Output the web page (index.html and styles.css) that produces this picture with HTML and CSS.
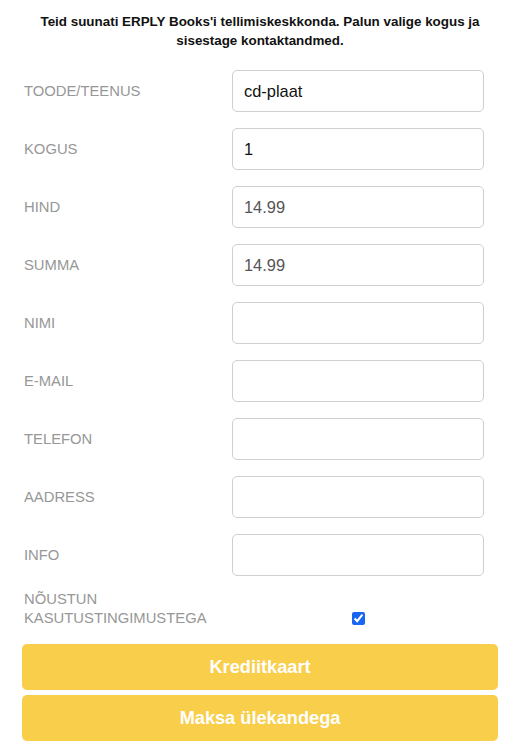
FILE: index.html
```html
<!DOCTYPE html>
<html lang="et">
<head>
<meta charset="utf-8">
<title>Tellimus</title>
<link rel="stylesheet" href="styles.css">
</head>
<body>
<div class="page">
  <p class="intro">Teid suunati ERPLY Books'i tellimiskeskkonda. Palun valige kogus ja sisestage kontaktandmed.</p>
  <form class="form">
    <div class="row"><label class="label">TOODE/TEENUS</label><input class="field dark" type="text" value="cd-plaat"></div>
    <div class="row"><label class="label">KOGUS</label><input class="field dark" type="text" value="1"></div>
    <div class="row"><label class="label">HIND</label><input class="field" type="text" value="14.99"></div>
    <div class="row"><label class="label">SUMMA</label><input class="field" type="text" value="14.99"></div>
    <div class="row"><label class="label">NIMI</label><input class="field" type="text"></div>
    <div class="row"><label class="label">E-MAIL</label><input class="field" type="text"></div>
    <div class="row"><label class="label">TELEFON</label><input class="field" type="text"></div>
    <div class="row"><label class="label">AADRESS</label><input class="field" type="text"></div>
    <div class="row"><label class="label">INFO</label><input class="field" type="text"></div>
    <div class="row agree"><label class="label">NÕUSTUN KASUTUSTINGIMUSTEGA</label><div class="checkcell"><input class="check" type="checkbox" checked></div></div>
    <div class="buttons">
      <button type="button" class="btn">Krediitkaart</button>
      <button type="button" class="btn">Maksa ülekandega</button>
    </div>
  </form>
</div>
</body>
</html>
```
FILE: styles.css
```css
html, body {
  margin: 0;
  padding: 0;
  background: #fff;
}
body {
  font-family: "Liberation Sans", Arial, sans-serif;
}
.page {
  padding: 0 21px 0 22px;
}
.intro {
  margin: 12px 0 0;
  text-align: center;
  font-weight: bold;
  font-size: 13.4px;
  line-height: 19px;
  color: #111;
}
.form {
  margin-top: 20px;
  display: flex;
  flex-direction: column;
  gap: 16px;
}
.row {
  display: flex;
  align-items: center;
  padding-left: 2px;
}
.label {
  width: 208px;
  flex: none;
  font-size: 14.8px;
  color: #979797;
  line-height: 19px;
}
.field {
  box-sizing: border-box;
  width: 252px;
  height: 42px;
  border: 1px solid #cfcfcf;
  border-radius: 5px;
  padding: 0 11px;
  font-family: "Liberation Sans", Arial, sans-serif;
  font-size: 16.4px;
  color: #555;
  background: #fff;
  outline: none;
}
.field.dark {
  color: #111;
}
.agree {
  margin-top: -2px;
  align-items: flex-end;
}
.checkcell {
  width: 252px;
  display: flex;
  justify-content: center;
  padding-bottom: 3px;
}
.check {
  margin: 0;
  width: 13px;
  height: 13px;
  accent-color: #1a66f0;
}
.buttons {
  display: flex;
  flex-direction: column;
  gap: 5px;
  margin-top: 0;
}
.btn {
  height: 46px;
  border: none;
  border-radius: 5px;
  background: #f9ce4a;
  color: #fff;
  font-family: "Liberation Sans", Arial, sans-serif;
  font-weight: bold;
  font-size: 18.2px;
  width: 476px;
  cursor: pointer;
}
```
